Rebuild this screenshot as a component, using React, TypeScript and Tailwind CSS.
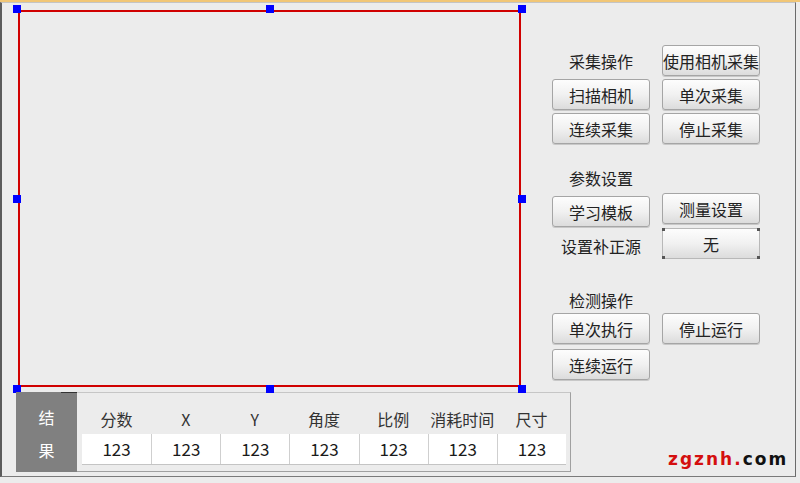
import React from 'react';

const cjk = { fontFamily: '"Noto Sans CJK SC", "Noto Sans", sans-serif' };

const Btn = ({ label, combo = false }: { label: string; combo?: boolean }) => (
  <div
    className={`relative h-[31px] w-[98px] rounded-[3px] border bg-gradient-to-b from-[#fdfdfd] via-[#f1f1f1] to-[#dcdcdc] flex items-center justify-center text-[16px] leading-none text-[#222] ${
      combo ? 'border-[#b8b8b8]' : 'border-[#a5a5a5] shadow-[0_1px_0_#c8c8c8]'
    }`}
  >
    {label}
    {combo && (
      <>
        <span className="absolute left-[-1px] top-[-1px] h-[3px] w-[3px] bg-[#555]" />
        <span className="absolute right-[-1px] top-[-1px] h-[3px] w-[3px] bg-[#555]" />
        <span className="absolute left-[-1px] bottom-[-1px] h-[3px] w-[3px] bg-[#555]" />
        <span className="absolute right-[-1px] bottom-[-1px] h-[3px] w-[3px] bg-[#555]" />
      </>
    )}
  </div>
);

const Label = ({ text }: { text: string }) => (
  <div className="h-[31px] w-[98px] flex items-center justify-center text-[16px] text-[#222]">{text}</div>
);

const Handle = ({ pos }: { pos: string }) => <span className={`absolute h-[8px] w-[8px] bg-[#0000ff] ${pos}`} />;

const cols = ['分数', 'X', 'Y', '角度', '比例', '消耗时间', '尺寸'];

export default function App() {
  return (
    <div className="relative w-[800px] h-[483px] bg-[#ececec] overflow-hidden" style={cjk}>
      <div className="h-[2px] bg-[#f1c676]" />
      <div className="w-[796px] h-[475px] border-t border-t-[#c4c4c4] border-l-2 border-l-[#5c5c5c] border-r border-r-[#6a6a6a] border-b border-b-[#7a7a7a] flex flex-col">
        {/* top: canvas + controls */}
        <div className="flex">
          <div className="relative ml-[16px] mt-[7px] w-[503px] h-[377px] border-2 border-[#d00000]">
            <Handle pos="left-[-7px] top-[-7px]" />
            <Handle pos="left-[246px] top-[-7px]" />
            <Handle pos="right-[-7px] top-[-7px]" />
            <Handle pos="left-[-7px] top-[183px]" />
            <Handle pos="right-[-7px] top-[183px]" />
            <Handle pos="left-[-7px] bottom-[-8px]" />
            <Handle pos="left-[246px] bottom-[-8px]" />
            <Handle pos="right-[-7px] bottom-[-8px]" />
          </div>

          <div className="ml-[31px] mt-[42px] flex flex-col">
            <div className="grid grid-cols-[98px_98px] gap-x-[12px] gap-y-[3px]">
              <Label text="采集操作" />
              <Btn label="使用相机采集" />
              <Btn label="扫描相机" />
              <Btn label="单次采集" />
              <Btn label="连续采集" />
              <Btn label="停止采集" />
            </div>

            <div className="mt-[18px] grid grid-cols-[98px_98px] gap-x-[12px] gap-y-[3px]">
              <Label text="参数设置" />
              <div />
              <Btn label="学习模板" />
              <div className="-mt-[3px]">
                <Btn label="测量设置" />
              </div>
              <Label text="设置补正源" />
              <div className="-mt-[2px]">
                <Btn label="无" combo />
              </div>
            </div>

            <div className="mt-[26px] flex flex-col">
              <div className="h-[26px] w-[98px] flex items-center justify-center text-[16px] text-[#222]">检测操作</div>
              <div className="flex gap-x-[12px]">
                <Btn label="单次执行" />
                <Btn label="停止运行" />
              </div>
              <div className="mt-[5px]">
                <Btn label="连续运行" />
              </div>
            </div>
          </div>
        </div>

        {/* bottom: result table */}
        <div className="ml-[14px] mt-[5px] w-[555px] h-[80px] flex">
          <div className="relative w-[61px] h-full bg-[#808080] flex flex-col items-center text-white text-[16px] leading-none">
            <span className="absolute right-0 top-0 h-[1px] w-[16px] bg-[#333]" />
            <span className="mt-[17px]">结</span>
            <span className="mt-[17px]">果</span>
          </div>
          <div className="flex-1 border-t border-t-[#c6c6c6] border-r border-r-[#a0a0a0] border-b border-b-[#a0a0a0] pl-[5px] pr-[3px]">
            <div className="h-[41px] grid grid-cols-7 w-[484px]">
              {cols.map(c => (
                <div key={c} className="pt-[16px] text-center text-[16px] leading-[20px] text-[#333]">{c}</div>
              ))}
            </div>
            <div className="h-[31px] grid grid-cols-7 w-[484px] border-b border-b-[#c4c4c4]">
              {cols.map((c, i) => (
                <div
                  key={c}
                  className={`bg-white flex items-center justify-center text-[17px] text-[#1a1a1a] ${i > 0 ? 'border-l border-l-[#cfcfcf]' : ''}`}
                >
                  123
                </div>
              ))}
            </div>
          </div>
        </div>
      </div>

      <div
        className="absolute left-[668px] top-[449px] text-[17px] font-bold leading-[20px] tracking-[2px]"
        style={{ fontFamily: '"DejaVu Sans", Verdana, sans-serif' }}
      >
        <span className="text-[#d40f0f]">zgznh.</span>
        <span className="text-[#111]">com</span>
      </div>
    </div>
  );
}
